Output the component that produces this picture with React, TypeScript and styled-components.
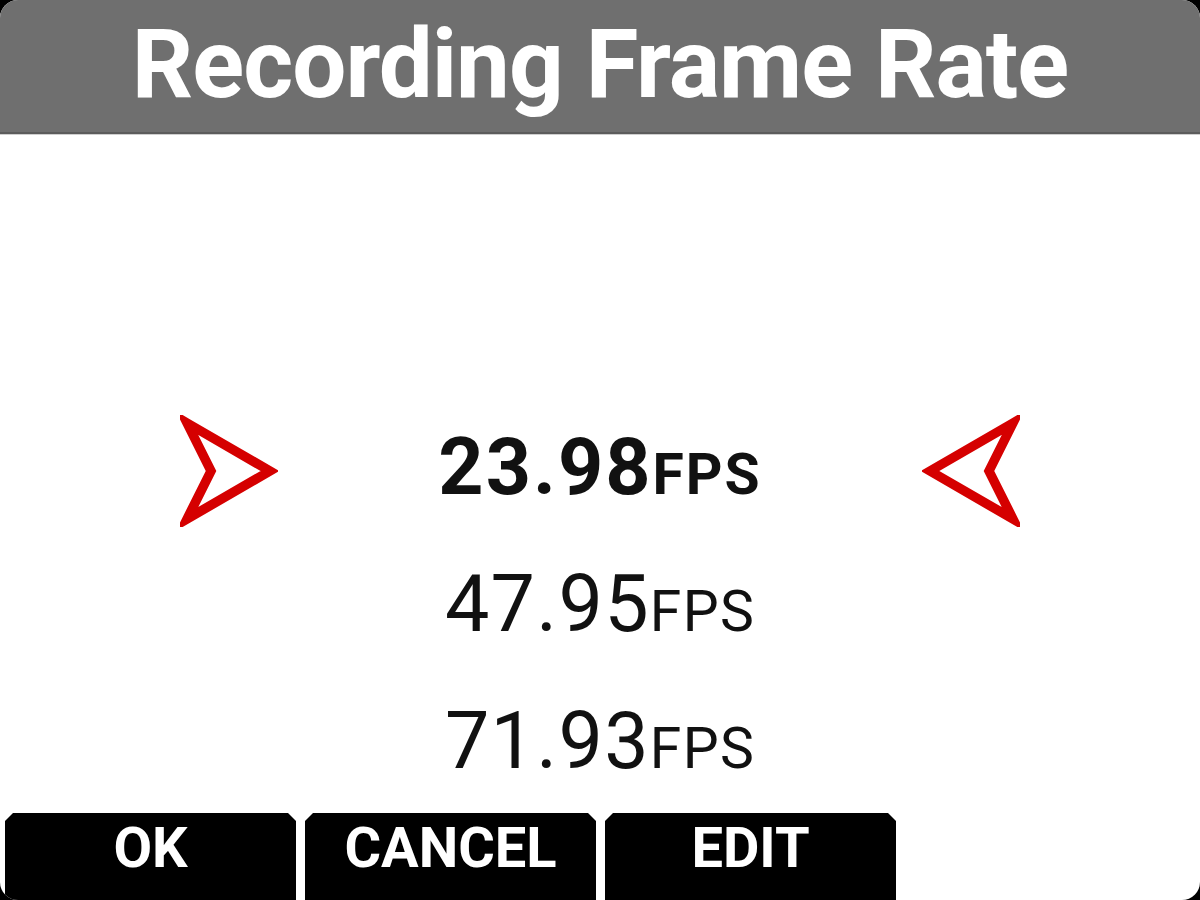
import styled, { createGlobalStyle } from 'styled-components';

const GlobalStyle = createGlobalStyle`
  html, body {
    margin: 0;
    padding: 0;
    background: #000;
  }
  body {
    font-family: Roboto, "Liberation Sans", sans-serif;
  }
`;

type Rate = { value: string; selected?: boolean };

const rates: Rate[] = [
  { value: '23.98', selected: true },
  { value: '47.95' },
  { value: '71.93' },
];

const actions = ['OK', 'CANCEL', 'EDIT'];

// 빨간 화살표 (선택 표시)
const Pointer = ({ flip }: { flip?: boolean }) => (
  <svg width="98" height="112" viewBox="0 0 98 112">
    <polygon
      points={flip ? '91,8 8,56 91,104 67,56' : '7,8 90,56 7,104 31,56'}
      fill="none"
      stroke="#d50000"
      strokeWidth="9.5"
      strokeLinejoin="miter"
      strokeMiterlimit="10"
    />
  </svg>
);

const App = () => {
  return (
    <>
      <GlobalStyle />
      <Screen>
        <Header>
          <Title>Recording Frame Rate</Title>
        </Header>
        <List>
          {rates.map((rate) => (
            <Row key={rate.value}>
              <Slot>{rate.selected && <Pointer />}</Slot>
              <Value $selected={rate.selected}>
                {rate.value}
                <Unit>FPS</Unit>
              </Value>
              <Slot>{rate.selected && <Pointer flip />}</Slot>
            </Row>
          ))}
        </List>
        <ActionBar>
          {actions.map((label) => (
            <ActionButton key={label}>{label}</ActionButton>
          ))}
        </ActionBar>
      </Screen>
    </>
  );
};

export default App;

// 화면 전체
const Screen = styled.div`
  width: 1200px;
  height: 900px;
  background: #fff;
  border-radius: 18px;
  overflow: hidden;
  display: flex;
  flex-direction: column;
`;

// 상단 제목 바
const Header = styled.div`
  height: 132px;
  background: #6f6f6f;
  border-bottom: 2px solid #5c5c5c;
  box-shadow: 0 1px 0 #cfcfcf;
  display: flex;
  justify-content: center;
  flex-shrink: 0;
`;

const Title = styled.h1`
  margin: 0;
  color: #fff;
  font-weight: 700;
  font-size: 96px;
  line-height: 128px;
  letter-spacing: -1px;
  white-space: nowrap;
`;

// 값 목록
const List = styled.div`
  flex: 1;
  display: flex;
  flex-direction: column;
  padding-top: 268px;
`;

const Row = styled.div`
  height: 137px;
  display: flex;
  align-items: center;
  justify-content: space-between;
  padding: 0 180px;
`;

const Slot = styled.div`
  width: 98px;
  height: 112px;
  display: flex;
  align-items: center;
`;

const Value = styled.div<{ $selected?: boolean }>`
  flex: 1;
  text-align: center;
  color: #111;
  font-size: 79px;
  line-height: 139px;
  font-weight: ${(p) => (p.$selected ? 700 : 400)};
  letter-spacing: ${(p) => (p.$selected ? '2px' : '1.3px')};
  white-space: nowrap;
`;

const Unit = styled.span`
  font-size: 57px;
`;

// 하단 버튼
const ActionBar = styled.div`
  height: 87px;
  display: flex;
  gap: 9px;
  padding-left: 5px;
  flex-shrink: 0;
`;

const ActionButton = styled.div`
  width: 291px;
  height: 100px;
  background: #000;
  color: #fff;
  font-weight: 700;
  font-size: 56px;
  line-height: 70px;
  text-align: center;
  clip-path: polygon(8px 0, calc(100% - 8px) 0, 100% 8px, 100% 100%, 0 100%, 0 8px);
`;
